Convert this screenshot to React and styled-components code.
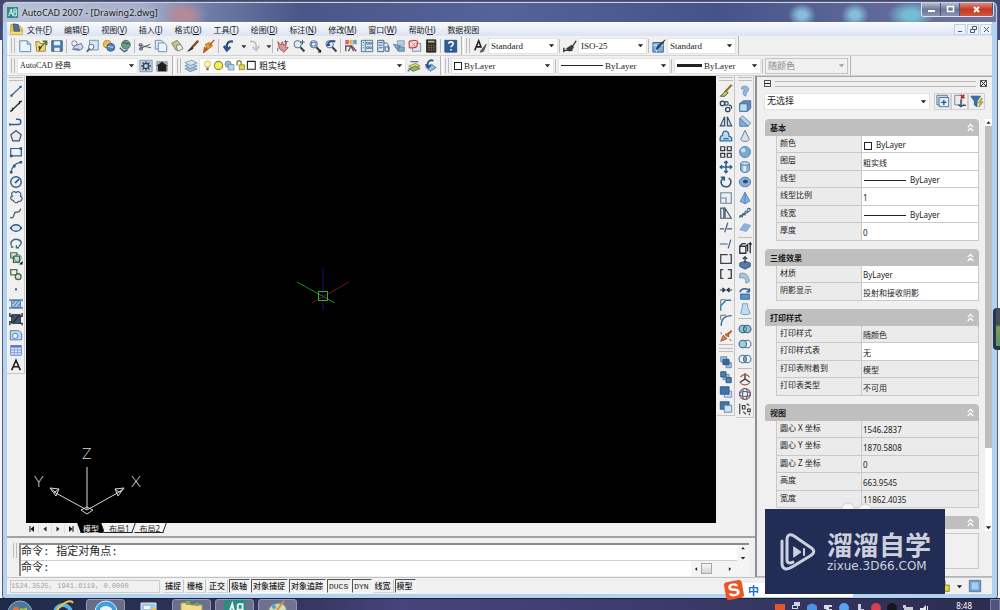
import styled, { createGlobalStyle, css } from 'styled-components'

const ui = '"Noto Sans", "Noto Sans CJK SC", sans-serif'
const song = '"Liberation Serif", "Noto Sans CJK SC", serif'
const mono = '"Liberation Mono", "Noto Sans CJK SC", monospace'

const GlobalStyle = createGlobalStyle`
    * { box-sizing: border-box; }
    body { margin: 0; overflow: hidden; font-family: ${ui}; font-size: 8px; color: #1c1c1c; }
    button, select, input { font: inherit; color: inherit; margin: 0; padding: 0; border: 0; background: none; border-radius: 0; outline: 0; }
    svg { display: block; flex: none; }
`

/* ---------- icons, all on a 16 unit grid ---------- */

const lens = (
    <>
        <circle cx='6.5' cy='6' r='4.2' fill='#dbeaf7' stroke='#4a5f7c' />
        <path d='M9.6 9.4l4.6 4.8' stroke='#30435e' strokeWidth='2.4' />
    </>
)

const icons = {
    newFile: <path d='M2 2h8.500l4 4v8.500H2zM10.500 2v4h4' fill='#e8f3fb' stroke='#4d7fae' />,
    open: (
        <>
            <path d='M2 3h4l1 2h6v9H3z' fill='#f3d77a' stroke='#9c7a2c' />
            <path d='M8 9l6-6M10 2.500h4.500V7' stroke='#4b6e2c' strokeWidth='1.6' />
            <path d='M5 8l4 1-3 5z' fill='#3a3a3a' stroke='none' />
        </>
    ),
    save: (
        <>
            <path d='M2 2h12v12H2z' fill='#4a7fb5' stroke='#31597f' />
            <path d='M4.500 2.500h7v4.500h-7zM5 10h6v4H5z' fill='#e9f1f8' stroke='none' />
        </>
    ),
    print: (
        <>
            <circle cx='5' cy='5' r='3' stroke='#6a7ba0' />
            <path d='M5 8l8-3 2 5-4 3-8-1z' fill='#cfd8ea' stroke='#5a6d97' />
            <path d='M5 11l6 1' stroke='#40527c' />
        </>
    ),
    preview: (
        <>
            <path d='M4 1.500h10v11H4z' fill='#d8e8f5' stroke='#6a8caf' />
            <circle cx='6' cy='9' r='3' fill='#f5fafe' stroke='#44607f' />
            <path d='M4 11l-3 3.500' stroke='#44607f' strokeWidth='2' />
        </>
    ),
    publish: (
        <>
            <circle cx='6' cy='6' r='4.500' fill='#f0c14b' stroke='#b2852a' />
            <circle cx='10' cy='9.500' r='4.500' fill='#4d84c4' stroke='#2e5586' />
            <path d='M7 9c2-2 4 2 6 0' stroke='#dcebf8' />
        </>
    ),
    web: (
        <>
            <circle cx='9' cy='6.500' r='5' fill='#6f9f83' stroke='#3d6a6b' />
            <path d='M6 5c2-3 4 2 7 0M2 10l5 4.500 4-2' stroke='#3d5a8c' strokeWidth='1.6' />
        </>
    ),
    cut: <path d='M1 7l14 3M2 11l12-5M1.500 5.500h3v2.500h-3zM2 10h3v2.500H2z' stroke='#3f4c60' />,
    copy: (
        <>
            <path d='M1.500 1.500h7l3 3v7h-10z' fill='#dcebf8' stroke='#5c86b2' />
            <path d='M5 4.500h7l2.500 3v7H5z' fill='#eef6fd' stroke='#5c86b2' />
        </>
    ),
    paste: (
        <>
            <path d='M2 5l6-3.500 5 6L7 13z' fill='#c5c39c' stroke='#77774f' />
            <path d='M7 7.500l5-1.500 3 5-6 3z' fill='#e9eedf' stroke='#6d7f6d' />
        </>
    ),
    brush: (
        <>
            <path d='M14 2L7.500 9' stroke='#7b4a2d' strokeWidth='2.600' />
            <path d='M7 8.500L2 14l6-3z' fill='#2b2b2b' stroke='#2b2b2b' />
        </>
    ),
    blockEdit: (
        <>
            <path d='M4 6l5-2 3 4-6 4z' fill='#e6a23d' stroke='#a66518' />
            <path d='M14 1L8 8M3 10l-1 5 4-3z' stroke='#bb5a24' strokeWidth='1.6' fill='#c94f2c' />
        </>
    ),
    undo: <path d='M12.500 3C7 2 5 5 5.500 10.500M2 8l3.500 5L9.500 9' stroke='#294f86' strokeWidth='2.600' />,
    redo: <path d='M3.500 3C9 2 11 5 10.500 10.500M14 8l-3.500 5L6.500 9' stroke='#b9bfc7' strokeWidth='2' />,
    drop: <path d='M5 7h6l-3 3.500z' fill='#333' stroke='none' />,
    pan: (
        <>
            <path d='M2 3l4 4 1-4 2 4 3-3-1 5 3 1-5 5-5-4z' fill='#d99a94' stroke='#a54a4a' />
            <path d='M11 1v4M9 3h5M2 10v4' stroke='#3c5d90' />
        </>
    ),
    zoomRt: (
        <>
            {lens}
            <path d='M12 1v5M9.500 3.500h5' stroke='#274c7c' />
        </>
    ),
    zoomWin: (
        <>
            {lens}
            <path d='M4 4h5v4H4z' stroke='#3c79bb' />
            <path d='M15 12v3.500h-4z' fill='#111' stroke='none' />
        </>
    ),
    zoomPrev: (
        <>
            {lens}
            <path d='M13 3C9 1 5 3 4 7l3 0' stroke='#254f91' strokeWidth='2' />
        </>
    ),
    props: (
        <>
            <path d='M1.500 1h4v5h-4z' fill='#d35a9e' stroke='none' />
            <path d='M6 1h4v5H6z' fill='#e7b93a' stroke='none' />
            <path d='M10.500 1h4v5h-4z' fill='#4fa6cf' stroke='none' />
            <path d='M2 7v7M2 8h8M5 14l3-6 3 6M10 9l4 5' stroke='#6a4767' strokeWidth='1.500' />
        </>
    ),
    design: (
        <>
            <path d='M1.500 1.500h13v13h-13z' fill='#dfeaf2' stroke='#45688b' />
            <path d='M6 2v12M7.500 4h2.500v2H7.500zM11 4h2v2h-2zM7.500 9h2.500v2H7.500zM11 9h2v2h-2zM3 4h1.500M3 7h1.500M3 10h1.500' stroke='#4c7a94' />
        </>
    ),
    palettes: (
        <>
            <path d='M2 1.500h7v13H2z' fill='#d8e6f4' stroke='#35557f' />
            <path d='M3.500 4h4M3.500 7h4M3.500 10h4M9 5c4-2 5 1 5 4v4M10 9h5v5h-4z' stroke='#2f5792' />
        </>
    ),
    sheets: (
        <>
            <path d='M6 2h8v5H6z' fill='#b8cfe2' stroke='#7e9db8' />
            <path d='M1.500 6l8 2-3 5zM7 9h7v5H7z' fill='#89a9c4' stroke='#5c7d9b' />
        </>
    ),
    markup: (
        <>
            <path d='M5 5h9.500v9H5z' fill='#dde5ee' stroke='#6c88a6' />
            <path d='M1.500 3c1-2 3 0 4-1s3 0 4 0 2 2 1 3 1 3-1 4-3 1-4 1-4 1-4-1 0-2 0-3-1-2 0-3z' fill='#fbe3e3' stroke='#c8403e' strokeWidth='1.400' />
            <path d='M4 4l5 5M9 4L4 9' stroke='#d9706e' />
        </>
    ),
    calc: (
        <>
            <path d='M3 1h10.500v14H3z' fill='#33302e' stroke='#1d1b1a' />
            <path d='M4.500 3h7.500' stroke='#9fc79f' strokeWidth='2' />
            <path d='M5 7.500h7M5 10h7M5 12.500h7' stroke='#c8775e' strokeDasharray='1.500 1.200' />
        </>
    ),
    help: (
        <>
            <path d='M1 1.500h13.500v13.500H1z' fill='#2c5f98' stroke='#234b79' />
            <path d='M5.500 5.500c0-3 5-3 5 0 0 2-2.500 2-2.500 4M8 11.500v1.500' stroke='#fff' strokeWidth='1.800' />
        </>
    ),
    textStyle: (
        <>
            <path d='M2 13L6.500 2l3 8M3.500 9h5' stroke='#222' strokeWidth='1.800' />
            <path d='M15 6l-5 6-2 3 4-1z' fill='#8b6b55' stroke='#44464f' />
        </>
    ),
    dimStyle: (
        <>
            <path d='M1 13h10M1 10v5M10 10L15 2' stroke='#333' strokeWidth='1.600' />
            <path d='M4 11l6-4 2 3-4 4z' fill='#39413b' stroke='#2a2f2c' />
        </>
    ),
    tableStyle: (
        <>
            <path d='M1 4h12v11H1z' fill='#7fb0dc' stroke='#2f5c8d' />
            <path d='M1 7h12M5 7v8' stroke='#e9f2fa' />
            <path d='M15 1L8 10l-3 2 1-4z' fill='#2b4c74' stroke='#243a58' />
        </>
    ),
    gear: (
        <>
            <path d='M1 1.500h14v13H1z' fill='#c3d1df' stroke='#7690aa' />
            <circle cx='8' cy='8' r='3' stroke='#34455c' strokeWidth='1.600' />
            <path d='M8 2.500v2M8 11.500v2M2.500 8h2M11.500 8h2M4 4l1.500 1.500M12 4l-1.500 1.500M4 12l1.500-1.500M12 12l-1.500-1.500' stroke='#34455c' strokeWidth='1.500' />
        </>
    ),
    home: (
        <>
            <path d='M2 3h12v11H2z' fill='#aeb6bd' stroke='#8b949d' />
            <path d='M1.500 8L8 3l6.500 5H13v6H3.500V8z' fill='#1c1f22' stroke='none' />
        </>
    ),
    layers: (
        <>
            <path d='M1 11l8-2.500 6 3-8 3z' fill='#a3bfdc' stroke='#6e90b5' />
            <path d='M1 7.500L9 5l6 3-8 3z' fill='#b9d1ea' stroke='#6e90b5' />
            <path d='M1 4l8-2.500 6 3-8 3z' fill='#d4e4f4' stroke='#7c9dc0' />
        </>
    ),
    bulb: (
        <>
            <path d='M8 1.500c-6 0-5 6-2.500 8.500h5C13 7.500 14 1.500 8 1.500z' fill='#fbf6a0' stroke='#b7a33a' />
            <path d='M6 12h4M6.500 14h3' stroke='#555' strokeWidth='1.500' />
        </>
    ),
    sun: <circle cx='8' cy='8' r='6' fill='#f7ee4c' stroke='#8d8b38' strokeWidth='1.600' />,
    vpFreeze: (
        <>
            <circle cx='6' cy='6' r='4.500' fill='#9fc1b5' stroke='#567f8c' />
            <path d='M6 6.500h8.500v8H6z' fill='#bcd3e6' stroke='#5d84a8' />
        </>
    ),
    lock: (
        <>
            <path d='M3 8V4c0-4 6-4 6 0v3' stroke='#8d8436' strokeWidth='2' />
            <path d='M6 7h8v7H6z' fill='#e4d843' stroke='#7d7a23' />
        </>
    ),
    swatch: <path d='M2 2h11.500v11.500H2z' fill='#fff' stroke='#222' strokeWidth='1.500' />,
    layerPrev: (
        <>
            <path d='M2 8l8-3 5 3-8 3z' fill='#e4dc6f' stroke='#8d9140' />
            <path d='M2 11l8-3 5 3-8 3z' fill='#8db46e' stroke='#577e4a' />
            <path d='M4 3h9M1 14l3-3' stroke='#57749b' strokeWidth='1.600' />
        </>
    ),
    layerStates: (
        <>
            <path d='M3 9l7-3 5 4-7 4z' fill='#9cb9d8' stroke='#4f74a0' />
            <path d='M12 2C7 0 4 4 6 9M3 6l3 4 3-3' stroke='#2d5589' strokeWidth='2' />
        </>
    ),

    line: (
        <>
            <path d='M2.500 13.500L13.500 3' stroke='#2e6694' strokeWidth='1.500' />
            <path d='M1.500 12h2.500v2.500H1.500zM12 2h2.500v2.500H12z' fill='#2e6694' stroke='none' />
        </>
    ),
    xline: <path d='M1.500 14.500l13-12.500M4 10v3h-2M12 6V3h2' stroke='#252c35' strokeWidth='1.500' />,
    pline: <path d='M1.500 12h9c4 0 4-6 0-6H8M1 10.500v3' stroke='#335f8d' strokeWidth='1.600' />,
    polygon: <path d='M8 2l6 4.500-2.300 7H4.300L2 6.500z' fill='#e5edf4' stroke='#3e4f62' strokeWidth='1.300' />,
    rect: (
        <>
            <path d='M2 4h12v8.500H2z' fill='#edf3f8' stroke='#3b5a82' strokeWidth='1.400' />
            <path d='M1 11h3v3H1zM12 2.500h3v3h-3z' fill='#2c5685' stroke='none' />
        </>
    ),
    arc: (
        <>
            <path d='M2.500 14C3 8 7 4 13.500 2.500' stroke='#3a5d88' strokeWidth='1.500' />
            <path d='M1 12.500h3v3H1zM4.500 5.500h3v3h-3zM12 1h3v3h-3z' fill='#2c5685' stroke='none' />
        </>
    ),
    circle: (
        <>
            <circle cx='8' cy='8' r='6' fill='#e8f1f8' stroke='#355e8a' strokeWidth='1.600' />
            <path d='M7.500 8.500l4-4M6.500 8.500h2' stroke='#26476d' strokeWidth='1.800' />
        </>
    ),
    cloud: <path d='M4 7C1 3 6 0 8 3c3-3 7 1 5 4 4 2 1 7-2 6-2 3-6 1-6-1-4-1-4-4-1-5z' fill='#e6eef6' stroke='#44597a' strokeWidth='1.300' />,
    spline: <path d='M1.500 13c3 2 4-2 5-5s5 2 7-5' stroke='#3e5573' strokeWidth='1.400' />,
    ellipse: (
        <>
            <ellipse cx='8' cy='8' rx='5.500' ry='3.700' fill='#d8e8f2' stroke='#2d5578' strokeWidth='1.600' />
            <path d='M1 7h2v2H1zM13 7h2v2h-2z' fill='#2d5578' stroke='none' />
        </>
    ),
    ellipseArc: <path d='M3 11C0 6 6 3 10 4c5 1 5 6 1 8M2 12.500h3M8.500 10.500v3h3' stroke='#3c648e' strokeWidth='1.600' />,
    insert: (
        <>
            <path d='M2 2h7v6H2z' fill='#d7e5d5' stroke='#456e50' strokeWidth='1.400' />
            <path d='M5 6h7v7H5z' fill='#c7dce9' stroke='#3e6a56' strokeWidth='1.400' />
            <circle cx='10' cy='8' r='4' stroke='#557a5c' />
            <path d='M15.500 11.500v4h-4z' fill='#111' stroke='none' />
        </>
    ),
    block: (
        <>
            <path d='M2 3h7v6H2z' fill='#edf2e2' stroke='#4a7351' strokeWidth='1.500' />
            <circle cx='10.500' cy='11' r='3.300' fill='#d9e6d6' stroke='#436a50' strokeWidth='1.500' />
        </>
    ),
    point: <circle cx='8' cy='8.500' r='1.300' fill='#35588a' stroke='none' />,
    hatch: (
        <>
            <path d='M3 3.500h10v9H3z' fill='#a5c6e6' stroke='#3a6a9e' />
            <path d='M1 2v3M1 3.500h14M15 2v3M1 12.500h14M1 11v3M15 11v3M5 12l6-8M4 8l3-4M9 12l4-5' stroke='#3a6a9e' />
        </>
    ),
    gradient: (
        <>
            <path d='M3 3h10v10H3z' fill='#40566b' stroke='#1f2d3a' />
            <path d='M1 1v4h3M15 1v4h-3M1 15v-4h3M12 13h3v2M5 12l6-8' stroke='#232f3b' strokeWidth='1.500' />
        </>
    ),
    region: (
        <>
            <path d='M1.500 3h8c4 0 5 3 5 6v4.500h-13z' fill='#bdd6ec' stroke='#4778aa' />
            <circle cx='7' cy='9' r='3' fill='#f2f7fb' stroke='#4778aa' />
        </>
    ),
    table: (
        <>
            <path d='M2 3h12v11H2z' fill='#e4eafc' stroke='#5c74c4' />
            <path d='M2 4h12' stroke='#5c74c4' strokeWidth='2.500' />
            <path d='M2 8h12M2 11h12M6 4v10M10 4v10' stroke='#7f93d6' />
        </>
    ),
    mtext: <path d='M3 14L8 2.500 13 14M4.800 10h6.400' stroke='#1b1b1b' strokeWidth='1.800' />,

    erase: (
        <>
            <path d='M14.500 1L7 9' stroke='#8a6d2c' strokeWidth='2.500' />
            <path d='M1.500 14h5l4-4-3-2z' fill='#b6cf62' stroke='#47463d' />
        </>
    ),
    copyObj: (
        <>
            <circle cx='4' cy='5' r='2.500' stroke='#33485f' strokeWidth='1.500' />
            <circle cx='10' cy='12' r='2.500' stroke='#33485f' strokeWidth='1.500' />
            <circle cx='8.500' cy='5' r='2' stroke='#33485f' strokeWidth='1.300' />
            <path d='M11 7c3 0 4 2 3 4' stroke='#33485f' strokeWidth='1.500' />
        </>
    ),
    mirror: <path d='M6.500 3v10.500H1.500zM9.500 3v10.500h5z' fill='#c9dbea' stroke='#334b66' strokeWidth='1.300' />,
    offset: (
        <>
            <path d='M1.500 13.500h13c1-4-2-5-3-5 0-8-8-8-7.500-1-3 0-3 4-2.500 6z' fill='#bcd9ee' stroke='#2f6c9f' strokeWidth='1.500' />
            <path d='M5 11h6' stroke='#2f6c9f' strokeWidth='1.500' />
        </>
    ),
    array: <path d='M2 2h4.500v4.500H2zM9.500 2H14v4.500H9.500zM2 9.500h4.500V14H2zM9.500 9.500H14V14H9.500z' stroke='#31373e' strokeWidth='1.400' />,
    move: <path d='M8 1.500v13M1.500 8h13M6 3.500l2-2 2 2M6 12.500l2 2 2-2M3.500 6l-2 2 2 2M12.500 6l2 2-2 2' stroke='#2f5f8f' strokeWidth='1.700' />,
    rotate: <path d='M5 3.500c-5 4-2 10 3 10s8-7 3-10M2 2.500h4v4' stroke='#2f5880' strokeWidth='1.800' />,
    scale: <path d='M2 2h12v12H2zM2 8h6v6' stroke='#6c879f' strokeWidth='1.300' fill='#eaf0f5' />,
    stretch: <path d='M2 2.500h3.500V14H2zM7 2.500L14 14H7z' stroke='#435468' strokeWidth='1.300' fill='#e9eff4' />,
    trim: <path d='M1 9h5M9 9h6M10 2L6.500 13' stroke='#3f6286' strokeWidth='1.400' />,
    extend: <path d='M1 8h9M13.500 3l-3 10' stroke='#3f6286' strokeWidth='1.400' />,
    breakPt: <path d='M10 3H2v10h12V3h-2' stroke='#3d4650' strokeWidth='1.500' />,
    breakObj: <path d='M5 3H2v10h3M10 13h4V3h-4' stroke='#3d4650' strokeWidth='1.600' />,
    join: <path d='M1 8h5.500M15 8H9.500M4 5.500L7 8l-3 2.500M12 5.500L9 8l3 2.500' fill='#2a3644' stroke='#2a3644' strokeWidth='1.300' />,
    chamfer: (
        <>
            <path d='M2 14.500V9l6-6.500h6' stroke='#2f7fae' strokeWidth='1.600' />
            <path d='M2 8V2h5' stroke='#5b5f66' />
        </>
    ),
    fillet: (
        <>
            <path d='M2.500 14.500C2.500 7 7 3 14.500 3' stroke='#2f6c9f' strokeWidth='1.600' />
            <path d='M2 8V2.500h6' stroke='#5b5f66' />
        </>
    ),
    explode: (
        <>
            <path d='M14.500 2L8 8' stroke='#b4502c' strokeWidth='2' />
            <path d='M2 14l3-7 4 4zM7 6l4-1 0 4z' fill='#e28542' stroke='#a3431f' />
            <path d='M2 4l1 2M12 12l2 1' stroke='#444' />
        </>
    ),
    front: (
        <>
            <path d='M2 2h7v6H2zM8 8.500h6v6H8z' fill='#a8c3de' stroke='#5f83a8' />
            <path d='M4.500 5h7v6h-7z' fill='#35699f' stroke='#2a5482' />
        </>
    ),
    back: (
        <>
            <path d='M4.500 5h7v6h-7z' fill='#a8c3de' stroke='#5f83a8' />
            <path d='M2 2h6v6H2zM8 8.500h6v6H8z' fill='#4a7db0' stroke='#2a5482' />
        </>
    ),
    above: (
        <>
            <path d='M6 7h8.500v7H6z' fill='#c7d9ea' stroke='#6e8eae' />
            <path d='M1.500 2h10v8.500h-10z' fill='#3f75ad' stroke='#2a5482' />
        </>
    ),
    under: (
        <>
            <path d='M1.500 2h10v8.500h-10z' fill='#3f75ad' stroke='#2a5482' />
            <path d='M6 6h8.500v8H6z' fill='#cfe0ef' stroke='#5c7fa4' />
        </>
    ),

    polysolid: <path d='M4 4c4-4 9 0 8 3s-3 2-3 7l-3-2V8c3 0 3-3-2-2z' fill='#8fb9e2' stroke='#7096bd' />,
    box: (
        <>
            <path d='M2 5l4-3h8.500v8.500l-3.500 3.500H2z' fill='#5d8cbb' stroke='#3f6c9b' />
            <path d='M2 5.500h8.500V14H2z' fill='#c4dcf2' stroke='#3f6c9b' />
        </>
    ),
    wedge: (
        <>
            <path d='M5 2l9.500 8-3 4L2 5z' fill='#b9cfe4' stroke='#6a87a5' />
            <path d='M2 5l9.500 9H2z' fill='#7fadd9' stroke='#4c7aaa' />
        </>
    ),
    cone: <path d='M8 1.500L13 12c-2 3-8 3-10 0z' fill='#d3e2f0' stroke='#60758c' />,
    sphere: (
        <>
            <circle cx='8' cy='8' r='6.300' fill='#7ba6d2' stroke='#5783b1' />
            <circle cx='6' cy='6' r='2.500' fill='#c9def1' stroke='none' />
        </>
    ),
    cylinder: (
        <>
            <path d='M3 4v8c2 3 8 3 10 0V4z' fill='#8db5dc' stroke='#44709d' />
            <path d='M6 5h3v8H6z' fill='#e3effa' stroke='none' />
            <ellipse cx='8' cy='4' rx='5' ry='2' fill='#c6dcf0' stroke='#44709d' />
        </>
    ),
    torus: (
        <>
            <ellipse cx='8' cy='8' rx='6.500' ry='5.500' fill='#86afd9' stroke='#4c76a5' />
            <ellipse cx='8.500' cy='7.500' rx='2.500' ry='1.700' fill='#23466f' stroke='#33577f' />
        </>
    ),
    pyramid: <path d='M8 1.500l5.500 10L8 14.500 2.500 12zM8 1.500v13' fill='#80b2de' stroke='#4a82b5' />,
    helix: <path d='M2 13c-1-3 4-3 3 0M5 11c-1-3 4-3 3 0M8 8c-1-3 4-3 3 0M11 5c-1-3 4-3 3 0M2 13l12-8' stroke='#3d618c' strokeWidth='1.300' />,
    planar: <path d='M2 10l5-7 7.500 2-5 7z' fill='#8ab3dc' stroke='#85a9cd' />,
    extrude: <path d='M2 6h7v8H2zM2 6l3-3h4M9 6l2-2v8M14 2v12M12.500 4L14 2l1.500 2' stroke='#2e3338' strokeWidth='1.500' />,
    pressPull: (
        <>
            <path d='M2 8l6-2 6 2v4l-6 3-6-3z' fill='#567ba8' stroke='#34557e' />
            <path d='M8 1v7M5.500 3.500L8 1l2.500 2.500' stroke='#333f55' strokeWidth='1.500' />
        </>
    ),
    sweep: <path d='M2 3c6-2 10 1 11 9l-4 2C9 9 7 7 2 8z' fill='#a9c4de' stroke='#7895b4' />,
    revolve: (
        <>
            <path d='M3 8h10v6H3z' fill='#5a92cb' stroke='#2f639a' />
            <path d='M2 6c2-5 9-5 11-1M13 1.500V5.500H9.500' stroke='#33679d' strokeWidth='1.700' />
        </>
    ),
    loft: <path d='M5 2h6v4l3 7c-3 2-9 2-11 0l2-7z' fill='#c1dbf0' stroke='#7499bc' />,
    union: (
        <>
            <circle cx='5.500' cy='8' r='4.300' fill='#8fc3d6' stroke='#39647f' strokeWidth='1.300' />
            <circle cx='10.500' cy='8' r='4.300' fill='#8fc3d6' stroke='#39647f' strokeWidth='1.300' />
            <ellipse cx='8' cy='8' rx='1.500' ry='3' stroke='#39647f' />
        </>
    ),
    subtract: (
        <>
            <circle cx='10.500' cy='8' r='4.300' fill='#f5f8fa' stroke='#4f7ba0' strokeWidth='1.300' />
            <circle cx='5.500' cy='8' r='4.300' fill='#a4cade' stroke='#3c688e' strokeWidth='1.300' />
        </>
    ),
    intersect: (
        <>
            <circle cx='5.500' cy='8' r='4.300' stroke='#4475a0' strokeWidth='1.300' />
            <circle cx='10.500' cy='8' r='4.300' stroke='#4475a0' strokeWidth='1.300' />
            <ellipse cx='8' cy='8' rx='1.500' ry='3' fill='#89b8d2' stroke='#4475a0' />
        </>
    ),
    move3d: (
        <>
            <path d='M8 8V1.500M8 8l-6 4M8 8l6 4' stroke='#30353c' strokeWidth='1.500' />
            <path d='M3 6c2-4 8-4 10 0M3 13c3 2 7 2 10 0' stroke='#b14c44' strokeWidth='1.300' />
        </>
    ),
    rotate3d: (
        <>
            <circle cx='8' cy='8' r='6.300' stroke='#b3434d' strokeWidth='1.300' />
            <ellipse cx='8' cy='8' rx='2.800' ry='6.300' stroke='#3f7a5e' strokeWidth='1.300' />
            <ellipse cx='8' cy='8' rx='6.300' ry='2.800' stroke='#4a5aa5' strokeWidth='1.300' />
        </>
    ),
    align3d: <path d='M2 2v12M5 4h3v4H5zM10 2l3 2M11 8h3v3h-3zM6 11l3 3M13 13v2' stroke='#393d42' strokeWidth='1.300' />,

    pickadd: (
        <>
            <path d='M1 1.500h12v11H1z' fill='#c9dced' stroke='#4f7397' />
            <path d='M3.500 4h11v10.500h-11z' fill='#e4eff8' stroke='#3e668f' />
            <path d='M9 6.500v6M6 9.500h6' stroke='#24588c' strokeWidth='1.500' />
        </>
    ),
    selectObj: (
        <>
            <path d='M2 1.500h8v11H2z' fill='#f2e9ea' stroke='#6b7d95' />
            <path d='M9 1l4 4M13 1L9 5' stroke='#c0272d' strokeWidth='1.800' />
            <path d='M9 6v8M6 12l3 2.500L13 12M12 13h3' stroke='#3c4d64' strokeWidth='1.400' />
        </>
    ),
    quickSel: (
        <>
            <path d='M1 2.500h11L8 8v6.500l-3-2V8z' fill='#3a74a8' stroke='#2a5b8a' />
            <path d='M13 5l-4 5h3l-2 5 5-6h-3l2-4z' fill='#f2d93c' stroke='#96892b' />
        </>
    ),
    tray: (
        <>
            <path d='M1.500 1.500h13v13h-13z' fill='#6f9fd0' stroke='#51759c' />
            <path d='M4 4h8v8H4z' fill='#a9cbec' stroke='none' />
        </>
    ),
    acad: (
        <>
            <path d='M0 0h16v16H0z' fill='#2a8c84' stroke='none' />
            <path d='M2.500 13L6 3l2.500 10M4 9h4M10 3v10M10 3h3.500v10H10M10 7h3' stroke='#e9f6f4' strokeWidth='1.400' />
        </>
    ),
    dwg: (
        <>
            <path d='M1 2h9l5 5v7H1z' fill='#f1c83f' stroke='#b98e22' />
            <path d='M4 1l6 1 2 8-7 0z' fill='#4d6fa4' stroke='#34507c' />
            <path d='M1 11h14v3H1z' fill='#f7dd64' stroke='none' />
        </>
    ),
    chevrons: <path d='M4 7.500l4-4 4 4M4 13l4-4 4 4' stroke='#fff' strokeWidth='1.800' />,
    up: <path d='M3 11h10L8 5z' fill='#222' stroke='none' />,
    down: <path d='M2 5h12l-6 7z' fill='#222' stroke='none' />,
    left: <path d='M11 3v10L5 8z' fill='#222' stroke='none' />,
    right: <path d='M5 3v10l6-5z' fill='#222' stroke='none' />,
    first: <path d='M12 2v12L5 8zM3 2h2v12H3z' fill='#111' stroke='none' />,
    last: <path d='M4 2v12l7-6zM11 2h2v12h-2z' fill='#111' stroke='none' />,
}

function Icon({ name, size = 14 }) {
    return (
        <svg width={size} height={size} viewBox='0 0 16 16' fill='none' aria-hidden='true'>
            {icons[name]}
        </svg>
    )
}

/* ---------- window frame ---------- */

const Desktop = styled.div`
    position: relative;
    min-height: 100vh;
    display: flex;
    flex-direction: column;
    padding-top: 2px;
    background: linear-gradient(#45467a 40px, #f4f6fb 40px);
`

const Window = styled.div`
    flex: 1;
    min-height: 0;
    display: flex;
    flex-direction: column;
    margin: 0 3px;
    border: solid #b3d2f0;
    border-width: 0 5px 4px 4px;
    border-radius: 5px 5px 3px 3px;
    background: #f0f0f0;
    box-shadow: 0 0 0 1px #56606f;
`

const TitleBar = styled.header`
    height: 20px;
    display: flex;
    align-items: center;
    margin: 0 -4px;
    padding-left: 4px;
    gap: 4px;
    border-top: 1px solid #c9d1e2;
    border-radius: 5px 5px 0 0;
    background:
        radial-gradient(ellipse 22px 14px at 181px 12px, #b58a98 30%, transparent),
        radial-gradient(ellipse 14px 12px at 799px 12px, #86bdd9 30%, transparent),
        radial-gradient(ellipse 14px 12px at 852px 12px, #86bdd9 30%, transparent),
        radial-gradient(ellipse 24px 14px at 908px 12px, #74bdd3 30%, transparent),
        linear-gradient(90deg, #b9c2d6, #a5aec9 14%, #6f7ba6 21%, #4a5688 30%, #56639a 50%, #46528a 72%, #5d6697 86%, #6d76a2);
`

const Caption = styled.h1`
    flex: 1;
    margin: 0;
    font-size: 9px;
    font-weight: 400;
    text-shadow: 0 0 4px #fff;
`

const CaptionButtons = styled.div`
    align-self: flex-start;
    display: flex;
    margin-right: 2px;
    border: 1px solid #dde3ee;
    border-top: 0;
    border-radius: 0 0 3px 3px;
    overflow: hidden;
`

const CaptionButton = styled.button`
    display: grid;
    place-items: center;
    width: ${({ $close }) => ($close ? 33 : 19)}px;
    height: 13px;
    border-right: 1px solid #4d5577;
    background: ${({ $close }) =>
        $close ? 'linear-gradient(#d98d7d, #c23a26 50%, #d0573b)' : 'linear-gradient(#b4bccf, #6d7798 50%, #8994b2)'};
`

const MenuBar = styled.nav`
    height: 14px;
    display: flex;
    align-items: center;
    gap: 12px;
    padding-left: 3px;
    border-top: 1px solid #fff;
    background: linear-gradient(#f6f8fd, #dce3f3);
`

const MenuLink = styled.a`
    color: #1c1c1c;
    text-decoration: none;
    line-height: 12px;
    white-space: nowrap;
    &:first-of-type { margin-left: -8px; }
`

const MdiButtons = styled.div`
    display: flex;
    gap: 1px;
    margin-left: auto;
`

const MdiButton = styled.button`
    display: grid;
    place-items: center;
    width: 12px;
    height: 11px;
    border: 1px solid #c3d0e4;
    background: #eef3fb;
`

/* ---------- toolbars ---------- */

const ToolRow = styled.div`
    height: 20px;
    display: flex;
    padding-left: 1px;
    gap: 1px;
    border-bottom: 1px solid #d2d2d2;
`

const Toolbar = styled.div`
    display: flex;
    align-items: center;
    padding: 0 2px;
    border-right: 1px solid #b5b5b5;
    border-left: 1px solid #fff;
`

const Grip = styled.span`
    flex: none;
    border: solid #bdbdbd;
    ${({ $flat }) =>
        $flat
            ? css`width: 14px; height: 4px; border-width: 1px 0; margin: 1px auto 2px;`
            : css`width: 4px; height: 15px; border-width: 0 1px; margin-right: 2px;`}
`

const Divider = styled.span`
    flex: none;
    background: #bcbcbc;
    ${({ $flat }) =>
        $flat ? css`width: 14px; height: 1px; margin: 1px auto 2px;` : css`width: 1px; height: 14px; margin: 0 2px 0 1px;`}
`

const ToolButton = styled.button`
    flex: none;
    display: grid;
    place-items: center;
    width: ${({ $w = 16 }) => $w}px;
    height: 15px;
    overflow: hidden;
`

const Combo = styled.label`
    flex: none;
    display: flex;
    align-items: center;
    gap: 2px;
    width: ${({ $w }) => $w}px;
    height: ${({ $h = 16 }) => $h}px;
    padding: 0 2px;
    border: 1px solid ${({ $off }) => ($off ? '#c4c4c4' : '#e3e3e3')};
    background: ${({ $off }) => ($off ? '#f0f0f0' : '#fff')};
    color: ${({ $off }) => ($off ? '#8a8a8a' : '#1c1c1c')};
    font-family: ${song};
    font-size: ${({ $size = 9 }) => $size}px;
    select {
        flex: 1;
        min-width: 0;
        appearance: none;
        opacity: 1;
    }
    > svg {
        opacity: ${({ $off }) => ($off ? 0.4 : 1)};
    }
`

const Stroke = styled.span`
    flex: none;
    width: ${({ $w }) => $w}px;
    height: ${({ $bold }) => ($bold ? 3 : 1)}px;
    background: #222;
`

const ColorBox = styled.span`
    flex: none;
    width: 8px;
    height: 8px;
    border: 1px solid #222;
    background: #fff;
`

const Flags = styled.span`
    display: flex;
`

function ComboBox({ label, value, before, w, h, off, size }) {
    return (
        <Combo $w={w} $h={h} $off={off} $size={size}>
            {before}
            <select aria-label={label} disabled={off}>
                <option>{value}</option>
            </select>
            <Icon name='down' size={7} />
        </Combo>
    )
}

function Tools({ names }) {
    return names.map((name, i) => {
        if (name === '|') return <Divider key={i} />
        if (name === '-') return <Divider key={i} $flat />
        return (
            <ToolButton key={i} $w={name === 'drop' ? 9 : 16} aria-label={name}>
                <Icon name={name} />
            </ToolButton>
        )
    })
}

/* ---------- workspace ---------- */

const Main = styled.main`
    flex: 1;
    min-height: 0;
    display: flex;
`

const Workspace = styled.div`
    flex: 1;
    min-width: 0;
    display: flex;
    flex-direction: column;
    border-right: 2px solid #8f8f8f;
`

const DrawRow = styled.div`
    flex: 1;
    min-height: 0;
    display: flex;
    padding-bottom: 2px;
`

const ToolColumn = styled.div`
    align-self: flex-start;
    width: 18px;
    display: flex;
    flex-direction: column;
    align-items: center;
    margin-right: 1px;
    border: solid #c6c6c6;
    border-width: 0 1px 1px 0;
`

const ToolStack = styled.div`
    display: flex;
    flex-direction: column;
    justify-content: space-between;
    height: ${({ $h }) => $h}px;
`

const Drawing = styled.section`
    flex: 1;
    min-width: 0;
    display: flex;
    flex-direction: column;
    margin-right: 1px;
`

const Canvas = styled.div`
    position: relative;
    flex: 1;
    min-height: 0;
    display: flex;
    align-items: flex-end;
    background: #000;
`

const Cursor = styled.svg`
    position: absolute;
    left: 39%;
    top: 43%;
`

const LayoutTabs = styled.div`
    height: 11px;
    display: flex;
    align-items: center;
`

const TabArrow = styled.button`
    display: grid;
    place-items: center;
    width: 13px;
    height: 10px;
    border-right: 1px solid #ddd;
`

const LayoutTab = styled.button`
    position: relative;
    z-index: 0;
    height: 11px;
    padding: 0 5px;
    line-height: 10px;
    font-size: 8px;
    color: ${({ $active }) => ($active ? '#fff' : '#1c1c1c')};
    &::before {
        content: '';
        position: absolute;
        z-index: -1;
        inset: 0 1px 1px;
        transform: skewX(${({ $active }) => ($active ? 20 : -20)}deg);
        border: solid #222;
        border-width: 0 1px 1px 0;
        background: ${({ $active }) => ($active ? '#000' : '#f4f4f4')};
    }
`

const CommandArea = styled.section`
    height: 41px;
    display: flex;
    padding: 5px 6px 1px;
    border-top: 2px solid #a2a2a2;
`

const CommandBox = styled.div`
    flex: 1;
    display: grid;
    grid-template-columns: 1fr 12px;
    grid-template-rows: 16px 1fr;
    border: solid #8b8b8b;
    border-width: 2px 0 0 2px;
    background: #fff;
    font: 11px/14px ${mono};
`

const History = styled.output`
    border-bottom: 1px solid #cfcfcf;
`

const Prompt = styled.label`
    grid-column: 1 / -1;
    display: flex;
    align-items: center;
    line-height: 13px;
    input { flex: 1; min-width: 0; }
`

const MiniScroll = styled.span`
    display: flex;
    flex-direction: ${({ $row }) => ($row ? 'row' : 'column')};
    justify-content: space-between;
    align-items: center;
    ${({ $row }) => $row && css`align-self: stretch; width: 58px; padding: 0 16px 0 2px;`}
    background: #f4f4f4;
`

const Thumb = styled.span`
    width: 11px;
    height: 11px;
    margin-right: 14px;
    border: 1px solid #a8a8a8;
    background: linear-gradient(#f7f7f7, #d4d4d4);
`

/* ---------- properties palette ---------- */

const Palette = styled.aside`
    width: 235px;
    display: flex;
    flex-direction: column;
    padding-left: 7px;
    border-top: 1px solid #a8a8a8;
    border-bottom: 1px solid #b4b4b4;
`

const PaletteGrip = styled.div`
    display: flex;
    align-items: center;
    gap: 4px;
    height: 13px;
    padding-right: 5px;
    &::before {
        content: '';
        order: 1;
        flex: 1;
        height: 4px;
        border: solid #b4b4b4;
        border-width: 1px 0;
    }
`

const TinyButton = styled.button`
    display: grid;
    place-items: center;
    width: 7px;
    height: 7px;
    border: 1px solid #555;
    &:last-child { order: 2; }
`

const PickRow = styled.div`
    display: flex;
    align-items: center;
    gap: 4px;
    height: 22px;
    padding-right: 7px;
`

const PickButtons = styled.div`
    display: flex;
    button {
        width: 17px;
        height: 17px;
        border: 1px solid #d0d0d0;
    }
`

const PickCombo = styled.div`
    flex: 1;
`

const PaletteBody = styled.div`
    flex: 1;
    min-height: 0;
    display: flex;
    gap: 6px;
    padding: 7px 0 6px;
`

const Sections = styled.div`
    flex: 1;
    display: flex;
    flex-direction: column;
    gap: 8px;
    padding-left: 1px;
    overflow: hidden;
`

const Section = styled.section`
    flex: none;
`

const SectionTitle = styled.h2`
    display: flex;
    align-items: center;
    justify-content: space-between;
    height: ${({ $cut }) => ($cut ? 13 : 17)}px;
    margin: 0;
    padding: 0 3px 0 5px;
    border-radius: 4px 4px 0 0;
    background: #bfbfbf;
    font-size: 8px;
    font-weight: 700;
`

const PropTable = styled.table`
    width: calc(100% - 11px);
    margin-left: 11px;
    border-collapse: separate;
    border-spacing: 0;
    table-layout: fixed;
    border-left: 1px solid #c9c9c9;
    tr { height: 17px; }
    tr:nth-child(even) { height: 18px; }
`

const Name = styled.th`
    width: 85px;
    padding: 0 3px;
    border: solid #c9c9c9;
    border-width: 0 1px 1px 0;
    vertical-align: top;
    text-align: left;
    font-weight: 400;
    line-height: 14px;
    background: #ebebeb;
`

const Value = styled.td`
    padding: 0 1px;
    border: solid #c9c9c9;
    border-width: 0 1px 1px 0;
    vertical-align: bottom;
    line-height: 14px;
    background: ${({ $locked }) => ($locked ? '#ebebeb' : '#fff')};
    span {
        display: inline-block;
        vertical-align: middle;
        margin: 0 4px 0 1px;
    }
`

const EmptyBlock = styled.div`
    height: 36px;
    margin: 4px 0 0 11px;
    border: 1px solid #c9c9c9;
`

const ScrollBar = styled.div`
    width: 7px;
    height: 412px;
    display: flex;
    flex-direction: column;
    align-items: center;
    background: #fff;
    &::before {
        content: '';
        order: 1;
        width: 100%;
        height: 322px;
        margin-bottom: auto;
        background: #bdbdbd;
    }
    svg:last-child { order: 2; }
`

/* ---------- status bar and taskbar ---------- */

const StatusBar = styled.footer`
    height: 17px;
    display: flex;
    align-items: center;
    gap: 1px;
    padding: 0 10px 0 3px;
    border-top: 1px solid #c4c4c4;
`

const Coords = styled.span`
    width: 150px;
    height: 13px;
    margin-right: 2px;
    border: 1px solid #cdcdcd;
    font: 7px/11px ${mono};
    color: #a2a2a2;
`

const StatusToggle = styled.button`
    height: 14px;
    padding: 0 2px 0 1px;
    border: 1px solid;
    border-color: ${({ $on }) => ($on ? '#555 #f8f8f8 #f8f8f8 #555' : '#f8f8f8 #c4c4c4 #d4d4d4 #f8f8f8')};
    font: 500 8px/11px ${mono};
`

const StatusTray = styled.div`
    display: flex;
    align-items: center;
    gap: 5px;
    margin-left: auto;
`

const Taskbar = styled.div`
    height: 12px;
    display: flex;
    gap: 4px;
    overflow: hidden;
    border-top: 1px solid #1c2138;
    background: linear-gradient(90deg, #1f2a48, #343760 30%, #47437c 40%, #3e3d70 60%, #2b2c50);
`

const TaskButton = styled.button`
    display: flex;
    justify-content: center;
    align-items: flex-start;
    width: 39px;
    height: 30px;
    border: 1px solid ${({ $open }) => ($open ? '#8f97b8' : 'transparent')};
    border-radius: 3px;
    background: ${({ $open }) => ($open ? 'rgba(255, 255, 255, .3)' : 'none')};
`

const Tray = styled.div`
    display: flex;
    gap: 4px;
    margin-left: auto;
    padding-top: 3px;
`

const Clock = styled.time`
    margin: 0 14px 0 22px;
    color: #fff;
    font-size: 8px;
    line-height: 8px;
`

const ShowDesktop = styled.button`
    width: 10px;
    height: 30px;
    border: 1px solid #7b7f9d;
    background: #50547a;
`

/* ---------- things floating above the window ---------- */

const Badge = styled.div`
    position: absolute;
    right: 55px;
    bottom: 16px;
    width: 180px;
    height: 85px;
    display: flex;
    align-items: center;
    gap: 10px;
    padding-left: 14px;
    background: #212d55;
    color: #ccd0dc;
    white-space: nowrap;
`

const BadgeEars = styled.svg`
    position: absolute;
    left: 76px;
    bottom: 100%;
`

const BadgeName = styled.strong`
    display: block;
    font: 700 26px/26px "Noto Sans CJK SC", sans-serif;
`

const BadgeSite = styled.span`
    display: block;
    margin-top: 2px;
    font: 12px/14px "DejaVu Sans", sans-serif;
`

const InputMethod = styled.div`
    position: absolute;
    right: 147px;
    bottom: 13px;
    width: 128px;
    height: 14px;
    display: flex;
    align-items: center;
    gap: 5px;
    background: linear-gradient(90deg, transparent 16px, #fff 16px);
    color: #1e6fc8;
    font: 700 11px/14px "Noto Sans CJK SC", sans-serif;
`

const SogouMark = styled.span`
    width: 18px;
    height: 18px;
    flex: none;
    display: grid;
    place-items: center;
    border-radius: 3px;
    background: #ee5323;
    color: #fff;
    font: 700 18px/18px "Liberation Sans", sans-serif;
    rotate: -10deg;
`

const Gadget = styled.div`
    position: absolute;
    right: 0;
    top: 308px;
    width: 7px;
    height: 42px;
    border-radius: 4px 0 0 4px;
    background: linear-gradient(90deg, #2c3548 3px, transparent 3px),
        linear-gradient(#46505f 40%, #7f9a5a 45%, #4f9d6a 90%, #2c3548 90%);
`

/* ---------- data ---------- */

const menus = [
    ['文件', 'F'],
    ['编辑', 'E'],
    ['视图', 'V'],
    ['插入', 'I'],
    ['格式', 'O'],
    ['工具', 'T'],
    ['绘图', 'D'],
    ['标注', 'N'],
    ['修改', 'M'],
    ['窗口', 'W'],
    ['帮助', 'H'],
    ['数据视图'],
]

const standard = [
    'newFile', 'open', 'save', '|', 'print', 'preview', 'publish', 'web', '|',
    'cut', 'copy', 'paste', 'brush', 'blockEdit', '|', 'undo', 'drop', 'redo', 'drop', '|',
    'pan', 'zoomRt', 'zoomWin', 'zoomPrev', '|', 'props', 'design', 'palettes', 'sheets', 'markup', 'calc', '|', 'help',
]

const draw = [
    'line', 'xline', 'pline', 'polygon', 'rect', 'arc', 'circle', 'cloud', 'spline', 'ellipse',
    'ellipseArc', 'insert', 'block', 'point', 'hatch', 'gradient', 'region', 'table', 'mtext',
]

const modify = [
    'erase', 'copyObj', 'mirror', 'offset', 'array', 'move', 'rotate', 'scale', 'stretch',
    'trim', 'extend', 'breakPt', 'breakObj', 'join', 'chamfer', 'fillet', 'explode',
]

const order = ['front', 'back', 'above', 'under']

const modeling = [
    'polysolid', 'box', 'wedge', 'cone', 'sphere', 'cylinder', 'torus', 'pyramid', 'helix', 'planar', '-',
    'extrude', 'pressPull', 'sweep', 'revolve', 'loft', '-', 'union', 'subtract', 'intersect', '-',
    'move3d', 'rotate3d', 'align3d',
]

const sections = [
    {
        title: '基本',
        rows: [
            ['颜色', 'ByLayer', { box: true }],
            ['图层', '粗实线'],
            ['线型', 'ByLayer', { line: true }],
            ['线型比例', '1'],
            ['线宽', 'ByLayer', { line: true }],
            ['厚度', '0'],
        ],
    },
    { title: '三维效果', rows: [['材质', 'ByLayer'], ['阴影显示', '投射和接收阴影']] },
    {
        title: '打印样式',
        rows: [
            ['打印样式', '随颜色', { locked: true }],
            ['打印样式表', '无'],
            ['打印表附着到', '模型', { locked: true }],
            ['打印表类型', '不可用', { locked: true }],
        ],
    },
    {
        title: '视图',
        rows: [
            ['圆心 X 坐标', '1546.2837', { locked: true }],
            ['圆心 Y 坐标', '1870.5808', { locked: true }],
            ['圆心 Z 坐标', '0', { locked: true }],
            ['高度', '663.9545', { locked: true }],
            ['宽度', '11862.4035', { locked: true }],
        ],
    },
]

const toggles = [
    ['捕捉'],
    ['栅格'],
    ['正交'],
    ['极轴', true],
    ['对象捕捉', true],
    ['对象追踪', true],
    ['DUCS', true],
    ['DYN', true],
    ['线宽'],
    ['模型', true],
]

function PropertiesPalette() {
    return (
        <Palette>
            <PaletteGrip>
                <TinyButton aria-label='折叠'>
                    <svg width='5' height='5'><path d='M0 2.500h5' stroke='#222' /></svg>
                </TinyButton>
                <TinyButton aria-label='关闭'>
                    <svg width='5' height='5'><path d='M0 0l5 5M5 0L0 5' stroke='#222' /></svg>
                </TinyButton>
            </PaletteGrip>
            <PickRow>
                <PickCombo>
                    <ComboBox label='选择' value='无选择' w='166' h='17' />
                </PickCombo>
                <PickButtons>
                    <Tools names={['pickadd', 'selectObj', 'quickSel']} />
                </PickButtons>
            </PickRow>
            <PaletteBody>
                <Sections>
                    {sections.map(({ title, rows }) => (
                        <Section key={title}>
                            <SectionTitle>
                                {title}
                                <Icon name='chevrons' size={11} />
                            </SectionTitle>
                            <PropTable>
                                <tbody>
                                    {rows.map(([name, value, opt = {}]) => (
                                        <tr key={name}>
                                            <Name scope='row'>{name}</Name>
                                            <Value $locked={opt.locked}>
                                                {opt.box && <ColorBox />}
                                                {opt.line && <Stroke $w={42} />}
                                                {value}
                                            </Value>
                                        </tr>
                                    ))}
                                </tbody>
                            </PropTable>
                        </Section>
                    ))}
                    <Section>
                        <SectionTitle $cut>
                            <span />
                            <Icon name='chevrons' size={11} />
                        </SectionTitle>
                        <EmptyBlock />
                    </Section>
                </Sections>
                <ScrollBar>
                    <Icon name='up' size={7} />
                    <Icon name='down' size={7} />
                </ScrollBar>
            </PaletteBody>
        </Palette>
    )
}

function UcsIcon() {
    return (
        <svg width='130' height='80' fill='none' stroke='#d8d8d8'>
            <path d='M61 24v42M61 67L28 49M61 67L95 48M55 67l6-3 6 3-6 4z' />
            <path d='M24 45l9 1-3 7zM24 45l5 4 4-3M98 45l-9 1 3 7zM98 45l-5 4-4-3' />
            <g fill='#d8d8d8' stroke='none' fontFamily='Lato' fontWeight='300' fontSize='16'>
                <text x='56' y='16'>Z</text>
                <text x='8' y='44'>Y</text>
                <text x='105' y='44'>X</text>
            </g>
        </svg>
    )
}

function TaskIcons() {
    return (
        <>
            <TaskButton aria-label='开始'>
                <svg width='26' height='26'>
                    <circle cx='13' cy='13' r='12' fill='#4d7899' stroke='#8fb0c6' />
                    <path d='M6 8c3-2 5-1 6 0v6H6z' fill='#e0713a' />
                    <path d='M13 8c3 1 5 1 7-1v7h-7z' fill='#9cc24a' />
                </svg>
            </TaskButton>
            <TaskButton aria-label='浏览器'>
                <svg width='26' height='26' fill='none'>
                    <circle cx='13' cy='13' r='8' stroke='#58b4e8' strokeWidth='4' />
                    <path d='M4 17C6 7 20-3 23 3' stroke='#f0c63c' strokeWidth='2' />
                </svg>
            </TaskButton>
            <TaskButton $open aria-label='下载'>
                <svg width='24' height='24'>
                    <circle cx='12' cy='12' r='11' fill='#3f9fe0' stroke='#d5ecfa' />
                    <path d='M6 9c3-4 9-4 12 0v4H6z' fill='#eaf6fd' />
                </svg>
            </TaskButton>
            <TaskButton aria-label='电脑'>
                <svg width='20' height='20'>
                    <path d='M2 3h15v12H2z' fill='#a5c5e4' stroke='#dfe9f3' />
                    <path d='M5 6h6v3H5z' fill='#f0f6fb' />
                    <path d='M12 8h5v6h-5z' fill='#e0c35c' />
                </svg>
            </TaskButton>
            <TaskButton $open aria-label='文件夹'>
                <svg width='26' height='20'>
                    <path d='M2 3h8l2 2h11v14H2z' fill='#f2dc8c' stroke='#b99a4c' />
                    <path d='M7 1h4v4H7zM16 3h4v3h-4z' fill='#71a86a' />
                </svg>
            </TaskButton>
            <TaskButton $open aria-label='AutoCAD'>
                <Icon name='acad' size={22} />
            </TaskButton>
            <TaskButton $open aria-label='画图'>
                <svg width='24' height='20'>
                    <path d='M3 9c2-6 15-8 17-1s-15 12-17 1z' fill='#cfdfae' stroke='#7898b3' />
                    <path d='M18 1l-7 9' stroke='#e28b3c' strokeWidth='2' />
                    <circle cx='8' cy='7' r='2' fill='#4f9dd4' />
                </svg>
            </TaskButton>
        </>
    )
}

const disc = 'M6 1a5 5 0 100 10a5 5 0 100-10z'

const trayIcons = [
    ['#e5552e', 'M1 2h10v9H1z'],
    ['#cfd4e4', 'M4 0h6v4H8v3H2V3h2zM3 4v2h4V4z'],
    ['#4b92e6', 'M1 4q5-5 10 0v7H1z'],
    ['#d7dae6', 'M2 3h8v2H7v2h3v4H4V7H2z'],
    ['#5aa2ec', disc],
    ['#c9cede', 'M4 2h3v5h3v4H4z'],
    ['#d8404f', disc],
    ['#15151c', disc],
    ['#c6c9d6', 'M1 3h3v2h7v6H2V6H1z'],
    ['#e6e8f0', 'M2 6h3l3-3v8H2zM9 4h1v6H9z'],
]

function App() {
    return (
        <Desktop>
            <GlobalStyle />
            <Window>
                <TitleBar>
                    <Icon name='acad' size={11} />
                    <Caption>AutoCAD 2007 - [Drawing2.dwg]</Caption>
                    <CaptionButtons>
                        <CaptionButton aria-label='最小化'>
                            <svg width='9' height='9'><path d='M1 5h7v2H1z' fill='#fff' /></svg>
                        </CaptionButton>
                        <CaptionButton aria-label='最大化'>
                            <svg width='9' height='9'><path d='M1.500 1.500h6v5h-6z' fill='none' stroke='#fff' strokeWidth='1.500' /></svg>
                        </CaptionButton>
                        <CaptionButton $close aria-label='关闭'>
                            <svg width='9' height='9'><path d='M2 2l5 5M7 2L2 7' stroke='#fff' strokeWidth='2' /></svg>
                        </CaptionButton>
                    </CaptionButtons>
                </TitleBar>
                <MenuBar>
                    <Icon name='dwg' size={13} />
                    {menus.map(([text, key]) => (
                        <MenuLink key={text} href='#'>
                            {text}
                            {key && <>(<u>{key}</u>)</>}
                        </MenuLink>
                    ))}
                    <MdiButtons>
                        <MdiButton aria-label='最小化文档'>
                            <svg width='7' height='7'><path d='M1 5.500h4' stroke='#44587a' /></svg>
                        </MdiButton>
                        <MdiButton aria-label='还原文档'>
                            <svg width='7' height='7'><path d='M2.500 .5h4v3h-4zM.5 3.500h4v3h-4z' fill='none' stroke='#44587a' /></svg>
                        </MdiButton>
                        <MdiButton aria-label='关闭文档'>
                            <svg width='7' height='7'><path d='M1 1l5 5M6 1L1 6' stroke='#44587a' /></svg>
                        </MdiButton>
                    </MdiButtons>
                </MenuBar>
                <ToolRow>
                    <Toolbar>
                        <Grip />
                        <Tools names={standard} />
                    </Toolbar>
                    <Toolbar>
                        <Grip />
                        <Tools names={['textStyle']} />
                        <ComboBox label='文字样式' value='Standard' w='70' />
                        <Tools names={['|', 'dimStyle']} />
                        <ComboBox label='标注样式' value='ISO-25' w='69' />
                        <Tools names={['|', 'tableStyle']} />
                        <ComboBox label='表格样式' value='Standard' w='69' />
                    </Toolbar>
                </ToolRow>
                <ToolRow>
                    <Toolbar>
                        <Grip />
                        <ComboBox label='工作空间' value='AutoCAD 经典' w='121' size={8} />
                        <Tools names={['gear', 'home']} />
                    </Toolbar>
                    <Toolbar>
                        <Grip />
                        <Tools names={['layers']} />
                        <ComboBox
                            label='图层'
                            value='粗实线'
                            w='207'
                            before={
                                <Flags>
                                    {['bulb', 'sun', 'vpFreeze', 'lock', 'swatch'].map((name) => (
                                        <Icon key={name} name={name} size={11} />
                                    ))}
                                </Flags>
                            }
                        />
                        <Tools names={['layerPrev', 'layerStates']} />
                    </Toolbar>
                    <Toolbar>
                        <Grip />
                        <ComboBox label='颜色控制' value='ByLayer' w='103' before={<ColorBox />} />
                        <Divider />
                        <ComboBox label='线型控制' value='ByLayer' w='112' before={<Stroke $w={42} />} />
                        <Divider />
                        <ComboBox label='线宽控制' value='ByLayer' w='87' before={<Stroke $w={25} $bold />} />
                        <Divider />
                        <ComboBox label='打印样式控制' value='随颜色' w='83' off />
                    </Toolbar>
                </ToolRow>
                <Main>
                    <Workspace>
                        <DrawRow>
                            <ToolColumn>
                                <Grip $flat />
                                <ToolStack $h={290}>
                                    <Tools names={draw} />
                                </ToolStack>
                            </ToolColumn>
                            <Drawing>
                                <Canvas>
                                    <Cursor width='56' height='48' fill='none'>
                                        <path d='M28 0v42' stroke='#12127c' />
                                        <path d='M2 14l38 21' stroke='#1c8a22' />
                                        <path d='M54 14L17 35' stroke='#7c1616' />
                                        <path d='M23.500 23.500h9v9h-9z' stroke='#35b035' />
                                    </Cursor>
                                    <UcsIcon />
                                </Canvas>
                                <LayoutTabs>
                                    {['first', 'left', 'right', 'last'].map((name) => (
                                        <TabArrow key={name} aria-label={name}>
                                            <Icon name={name} size={8} />
                                        </TabArrow>
                                    ))}
                                    <LayoutTab $active>模型</LayoutTab>
                                    <LayoutTab>布局1</LayoutTab>
                                    <LayoutTab>布局2</LayoutTab>
                                </LayoutTabs>
                            </Drawing>
                            <ToolColumn>
                                <Grip $flat />
                                <ToolStack $h={260}>
                                    <Tools names={modify} />
                                </ToolStack>
                                <Divider $flat />
                                <Grip $flat />
                                <ToolStack $h={61}>
                                    <Tools names={order} />
                                </ToolStack>
                            </ToolColumn>
                            <ToolColumn>
                                <Grip $flat />
                                <ToolStack $h={334}>
                                    <Tools names={modeling} />
                                </ToolStack>
                            </ToolColumn>
                        </DrawRow>
                        <CommandArea>
                            <Grip />
                            <CommandBox>
                                <History>命令: 指定对角点:</History>
                                <MiniScroll>
                                    <Icon name='up' size={6} />
                                    <Icon name='down' size={6} />
                                </MiniScroll>
                                <Prompt>
                                    命令:
                                    <input aria-label='命令' />
                                    <MiniScroll $row>
                                        <Icon name='left' size={6} />
                                        <Thumb />
                                        <Icon name='right' size={6} />
                                    </MiniScroll>
                                </Prompt>
                            </CommandBox>
                        </CommandArea>
                    </Workspace>
                    <PropertiesPalette />
                </Main>
                <StatusBar>
                    <Coords>1524.3525, 1941.6119, 0.0000</Coords>
                    {toggles.map(([text, on]) => (
                        <StatusToggle key={text} $on={on} aria-pressed={!!on}>
                            {text}
                        </StatusToggle>
                    ))}
                    <StatusTray>
                        <Icon name='lock' size={14} />
                        <Icon name='down' size={7} />
                        <Icon name='tray' size={14} />
                    </StatusTray>
                </StatusBar>
            </Window>
            <Taskbar>
                <TaskIcons />
                <Tray>
                    {trayIcons.map(([color, shape]) => (
                        <svg key={color} width='12' height='12'>
                            <path d={shape} fill={color} fillRule='evenodd' />
                        </svg>
                    ))}
                    <Clock>8:48</Clock>
                </Tray>
                <ShowDesktop aria-label='显示桌面' />
            </Taskbar>
            <Gadget />
            <InputMethod>
                <SogouMark>S</SogouMark>中
            </InputMethod>
            <Badge>
                <BadgeEars width='34' height='7' fill='#f6f6f6' stroke='#cfcfcf'>
                    <circle cx='7' cy='7' r='6' />
                    <circle cx='24' cy='9' r='7' />
                </BadgeEars>
                <svg width='38' height='40' fill='none' stroke='#ccd0dc' strokeWidth='3' strokeLinejoin='round' strokeLinecap='round'>
                    <path d='M3 9v22c0 7 5 7 10 4l18-11c5-3 5-6 0-9L15 4C10 1 8 4 8 7v21c0 3 3 4 6 2' />
                    <path d='M15 15l7 5-7 5z' fill='#ccd0dc' strokeWidth='1' />
                    <path d='M25 17v6' strokeWidth='2' />
                </svg>
                <div>
                    <BadgeName>溜溜自学</BadgeName>
                    <BadgeSite>zixue.3D66.COM</BadgeSite>
                </div>
            </Badge>
        </Desktop>
    )
}

export default App
